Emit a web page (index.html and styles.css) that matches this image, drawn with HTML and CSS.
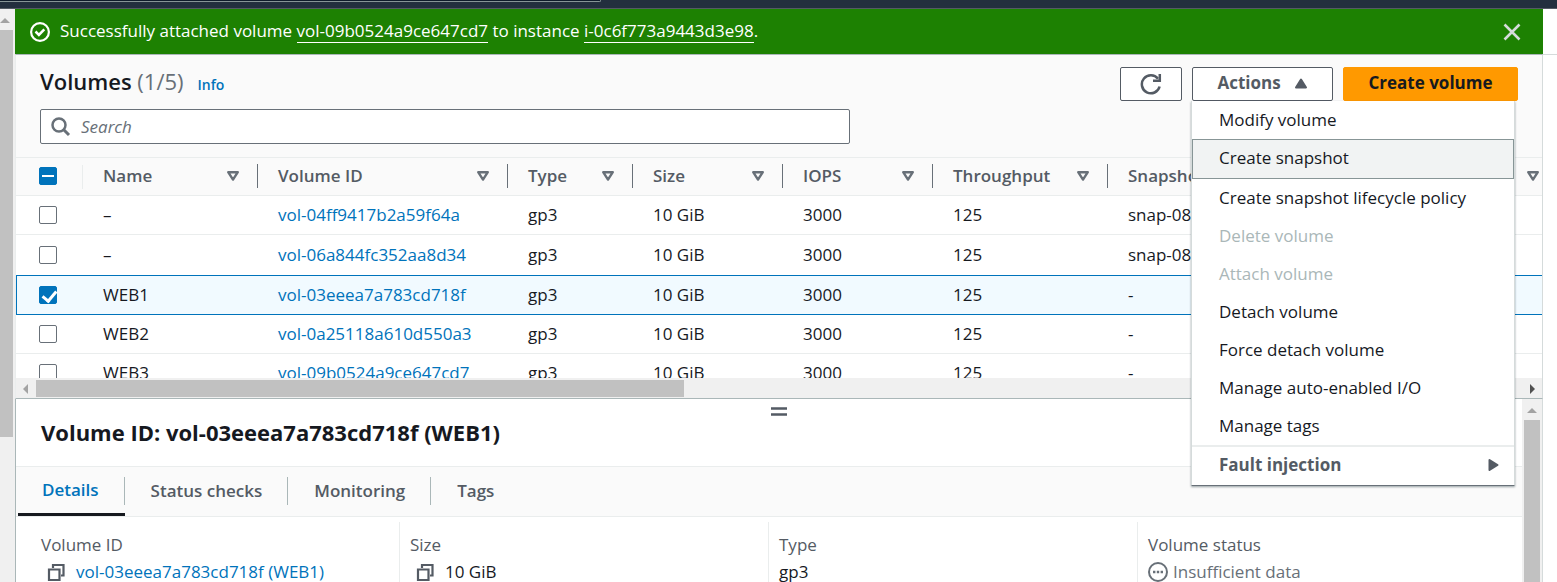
FILE: index.html
```html
<!DOCTYPE html>
<html lang="en">
<head>
<meta charset="utf-8">
<title>Volumes | EC2</title>
<link rel="stylesheet" href="styles.css">
</head>
<body>
<svg class="sprite" aria-hidden="true">
  <symbol id="i-sort" viewBox="0 0 14 12"><path d="M2.200 2.200h9.600L7 9.600z" fill="none" stroke="#687078" stroke-width="2.400" stroke-linejoin="round"/></symbol>
  <symbol id="i-copy" viewBox="0 0 20 18"><path d="M3 6.500h10.500V17H3z" fill="none" stroke="#545b64" stroke-width="2.200"/><path d="M7 5V2h10.500v10.500H15" fill="none" stroke="#545b64" stroke-width="2.200"/></symbol>
</svg>
<header class="topbar"><div class="topbar-search"></div></header>
<div class="shell">
  <div class="vscroll"><span class="arrow-up"></span><div class="vthumb"></div></div>
  <main class="main">
    <div class="flash" role="status">
      <svg class="flash-icon" viewBox="0 0 20 20"><circle cx="10" cy="10" r="8.900" fill="none" stroke="#fff" stroke-width="2.200"/><path d="M5.500 9.500l3.400 3.400 5.400-5.600" fill="none" stroke="#fff" stroke-width="2.500"/></svg>
      <p class="flash-text">Successfully attached volume <a href="#">vol-09b0524a9ce647cd7</a> to instance <a href="#">i-0c6f773a9443d3e98</a>.</p>
      <button class="flash-close" aria-label="Close"><svg viewBox="0 0 18 18"><path d="M1.500 1.500l15 15M16.500 1.500l-15 15" stroke="#d5dbdb" stroke-width="2.600"/></svg></button>
    </div>
    <section class="volumes">
      <div class="toolbar">
        <div class="titles">
          <h1 class="title">Volumes <span class="count">(1/5)</span></h1>
          <a class="info" href="#">Info</a>
        </div>
        <div class="actions">
          <button class="btn btn-refresh" aria-label="Refresh"><svg viewBox="0 0 22 22"><path d="M19.600 13.500A9 9 0 1 1 18 5.800" fill="none" stroke="#545b64" stroke-width="2.500"/><path d="M19.800 1v6.700H13" fill="none" stroke="#545b64" stroke-width="2.500"/></svg></button>
          <div class="dropdown">
            <button class="btn btn-actions" aria-expanded="true">Actions <svg viewBox="0 0 14 11"><path d="M7 1.500L12 9.500H2z" fill="#545b64" stroke="#545b64" stroke-width="2" stroke-linejoin="round"/></svg></button>
            <div class="menu" role="menu">
              <button class="item" role="menuitem">Modify volume</button>
              <button class="item item-active" role="menuitem">Create snapshot</button>
              <button class="item" role="menuitem">Create snapshot lifecycle policy</button>
              <button class="item" role="menuitem" disabled>Delete volume</button>
              <button class="item" role="menuitem" disabled>Attach volume</button>
              <button class="item" role="menuitem">Detach volume</button>
              <button class="item" role="menuitem">Force detach volume</button>
              <button class="item" role="menuitem">Manage auto-enabled I/O</button>
              <button class="item" role="menuitem">Manage tags</button>
              <button class="item item-group" role="menuitem">Fault injection <svg viewBox="0 0 11 14"><path d="M1.500 2L9.500 7l-8 5z" fill="#545b64" stroke="#545b64" stroke-width="2" stroke-linejoin="round"/></svg></button>
            </div>
          </div>
          <button class="btn btn-primary">Create volume</button>
        </div>
      </div>
      <div class="search">
        <svg viewBox="0 0 20 20"><circle cx="8" cy="8" r="6.500" fill="none" stroke="#687078" stroke-width="2.500"/><path d="M12.500 12.500l5.500 5.500" stroke="#687078" stroke-width="3"/></svg>
        <input type="text" placeholder="Search" aria-label="Search volumes">
      </div>
      <div class="table-wrap">
        <table class="table">
          <colgroup><col class="c-check"><col class="c-name"><col class="c-id"><col class="c-type"><col class="c-mid"><col class="c-mid"><col class="c-thr"><col class="c-snap"></colgroup>
          <thead>
            <tr>
              <th class="light"><input type="checkbox" class="check mixed" aria-label="Select all"></th>
              <th><div class="th">Name<svg><use href="#i-sort"/></svg></div></th>
              <th><div class="th">Volume ID<svg><use href="#i-sort"/></svg></div></th>
              <th><div class="th">Type<svg><use href="#i-sort"/></svg></div></th>
              <th><div class="th">Size<svg><use href="#i-sort"/></svg></div></th>
              <th><div class="th">IOPS<svg><use href="#i-sort"/></svg></div></th>
              <th><div class="th">Throughput<svg><use href="#i-sort"/></svg></div></th>
              <th><div class="th">Snapshot<svg><use href="#i-sort"/></svg></div></th>
            </tr>
          </thead>
          <tbody>
            <tr><td><input type="checkbox" class="check" aria-label="Select vol-04ff9417b2a59f64a"></td><td>–</td><td><a href="#">vol-04ff9417b2a59f64a</a></td><td>gp3</td><td>10 GiB</td><td>3000</td><td>125</td><td>snap-08</td></tr>
            <tr class="before-selected"><td><input type="checkbox" class="check" aria-label="Select vol-06a844fc352aa8d34"></td><td>–</td><td><a href="#">vol-06a844fc352aa8d34</a></td><td>gp3</td><td>10 GiB</td><td>3000</td><td>125</td><td>snap-08</td></tr>
            <tr class="selected"><td><input type="checkbox" class="check" checked aria-label="Select WEB1"></td><td>WEB1</td><td><a href="#">vol-03eeea7a783cd718f</a></td><td>gp3</td><td>10 GiB</td><td>3000</td><td>125</td><td>-</td></tr>
            <tr><td><input type="checkbox" class="check" aria-label="Select WEB2"></td><td>WEB2</td><td><a href="#">vol-0a25118a610d550a3</a></td><td>gp3</td><td>10 GiB</td><td>3000</td><td>125</td><td>-</td></tr>
            <tr><td><input type="checkbox" class="check" aria-label="Select WEB3"></td><td>WEB3</td><td><a href="#">vol-09b0524a9ce647cd7</a></td><td>gp3</td><td>10 GiB</td><td>3000</td><td>125</td><td>-</td></tr>
          </tbody>
        </table>
      </div>
      <div class="hscroll"><span class="arrow-left"></span><div class="htrack"><div class="hthumb"></div></div><span class="arrow-right"></span></div>
    </section>
    <section class="split">
      <div class="split-body">
        <div class="grip"><svg viewBox="0 0 16 10"><path d="M0 1.500h16M0 7.500h16" stroke="#545b64" stroke-width="2.400"/></svg></div>
        <h2 class="split-title">Volume ID: vol-03eeea7a783cd718f (WEB1)</h2>
        <div class="tabs" role="tablist">
          <button class="tab tab-active" role="tab" aria-selected="true">Details</button>
          <button class="tab" role="tab">Status checks</button>
          <button class="tab" role="tab">Monitoring</button>
          <button class="tab" role="tab">Tags</button>
        </div>
        <dl class="details">
          <div class="field"><dt>Volume ID</dt><dd><svg class="copy"><use href="#i-copy"/></svg><a href="#">vol-03eeea7a783cd718f (WEB1)</a></dd></div>
          <div class="field"><dt>Size</dt><dd><svg class="copy"><use href="#i-copy"/></svg>10 GiB</dd></div>
          <div class="field"><dt>Type</dt><dd>gp3</dd></div>
          <div class="field"><dt>Volume status</dt><dd class="muted"><svg class="status" viewBox="0 0 20 20"><circle cx="10" cy="10" r="9" fill="none" stroke="#687078" stroke-width="2"/><path d="M5 10h2.400M8.800 10h2.400M12.600 10H15" stroke="#687078" stroke-width="2.400"/></svg>Insufficient data</dd></div>
        </dl>
      </div>
      <div class="vscroll vscroll-inner"><span class="arrow-up"></span><div class="vthumb"></div></div>
    </section>
  </main>
  <aside class="side"></aside>
</div>
</body>
</html>
```
FILE: styles.css
```css
* { box-sizing: border-box; }
body {
  margin: 0;
  height: 100vh;
  overflow: hidden;
  display: flex;
  flex-direction: column;
  background: #fff;
  color: #16191f;
  font: 17px/24px "Open Sans", "Noto Sans", sans-serif;
}
h1, h2, p, dl, dd { margin: 0; }
button, input { font: inherit; color: inherit; }
button { padding: 0; background: none; border: 0; }
a { color: #0073bb; text-decoration: none; }
svg { display: block; flex: none; }
.sprite { position: absolute; width: 0; height: 0; }

.topbar {
  flex: none;
  height: 9px;
  background: #232f3e;
  border-bottom: 1px solid #545b64;
}
.topbar-search {
  width: 601px;
  height: 2px;
  background: #0f1b2a;
  border-bottom: 1px solid #879596;
  border-right: 1px solid #879596;
  border-bottom-right-radius: 2px;
}
.shell { flex: 1; min-height: 0; display: flex; }
.main { flex: 1; min-width: 0; display: flex; flex-direction: column; }
.side {
  width: 14px;
  height: 46px;
  border-bottom: 1px solid #d5dbdb;
}

.vscroll {
  width: 15px;
  padding-right: 2px;
  background: #f0f0f0;
  display: flex;
  flex-direction: column;
}
.vscroll .vthumb { height: 407px; background: #c1c1c1; }
.arrow-up { height: 21px; padding: 9px 0 0; }
.arrow-up::before {
  content: "";
  display: block;
  width: 0;
  border: 5px solid transparent;
  border-top: 0;
  border-bottom-color: #a3a3a3;
}

.flash {
  flex: none;
  height: 45px;
  padding: 0 22px 0 15px;
  display: flex;
  align-items: center;
  background: #1d8102;
  color: #fff;
}
.flash-icon { width: 20px; height: 20px; margin-right: 10px; }
.flash-text { flex: 1; padding-bottom: 2px; }
.flash-text a { color: #fff; border-bottom: 1px solid #fff; }
.flash-close svg { width: 18px; height: 18px; }

.volumes {
  flex: none;
  background: #fafafa;
  border: 1px solid #aab7b8;
  border-left-color: #eaeded;
  border-right-color: #d5dbdb;
}
.toolbar {
  display: flex;
  justify-content: space-between;
  padding: 12px 24px 8px;
}
.titles { display: flex; align-items: baseline; gap: 10px; }
.title { font-size: 22px; line-height: 28px; font-weight: 600; }
.count { font-weight: 400; color: #687078; }
.info { margin-left: 4px; font-size: 14px; font-weight: 600; }
.actions { display: flex; gap: 10px; }
.btn {
  height: 34px;
  padding-bottom: 2px;
  display: flex;
  align-items: center;
  justify-content: center;
  background: #fff;
  border: 1px solid #545b64;
  border-radius: 2px;
  font-weight: 700;
  color: #545b64;
}
.btn-refresh { width: 62px; padding: 0; }
.btn-refresh svg { width: 22px; height: 22px; }
.btn-actions { width: 141px; gap: 13px; }
.btn-actions svg { width: 14px; height: 11px; }
.btn-primary { width: 175px; background: #ff9900; border-color: #ff9900; color: #16191f; }

.dropdown { position: relative; }
.menu {
  position: absolute;
  z-index: 2;
  top: 34px;
  left: -1px;
  width: 324px;
  display: flex;
  flex-direction: column;
  background: #fff;
  border: 1px solid #d5dbdb;
  border-top: 0;
  border-bottom-color: #687078;
  box-shadow: 0 1px 2px rgba(0, 28, 36, 0.4);
}
.item {
  height: 38px;
  padding: 0 27px;
  text-align: left;
  white-space: nowrap;
}
.item:disabled { color: #aab7b8; }
.item-active {
  height: 40px;
  padding: 0 26px 2px;
  background: #f1f3f3;
  border: 1px solid #879596;
}
.item-group {
  height: 40px;
  padding: 0 15px 2px 27px;
  border-top: 2px solid #eaeded;
  display: flex;
  align-items: center;
  justify-content: space-between;
  font-weight: 700;
  color: #545b64;
}
.item-group svg { width: 11px; height: 14px; }

.search {
  max-width: 810px;
  height: 35px;
  margin: 0 24px 13px;
  padding: 0 10px;
  display: flex;
  align-items: center;
  gap: 10px;
  background: #fff;
  border: 1px solid #687078;
  border-radius: 2px;
}
.search svg { width: 20px; height: 20px; }
.search input { flex: 1; min-width: 0; padding: 0; border: 0; outline: 0; background: none; }
.search input::placeholder { color: #687078; font-style: italic; opacity: 1; }

.table-wrap { height: 221px; overflow: hidden; }
.table {
  width: 100%;
  min-width: 1542px;
  table-layout: fixed;
  border-collapse: separate;
  border-spacing: 0;
  text-align: left;
}
.c-check { width: 67px; }
.c-name, .c-thr { width: 175px; }
.c-id { width: 250px; }
.c-type { width: 125px; }
.c-mid { width: 150px; }
.c-snap { width: 450px; }
th {
  height: 39px;
  padding: 0 0 2px;
  border-top: 1px solid #eaeded;
  border-bottom: 1px solid #eaeded;
  font-weight: 600;
  color: #545b64;
}
.th {
  display: flex;
  align-items: center;
  justify-content: space-between;
  padding: 0 17px 0 20px;
  border-right: 1px solid #687078;
}
.th svg { width: 14px; height: 12px; }
.light { background: linear-gradient(#eaeded, #eaeded) right center / 1px 24px no-repeat; }
td {
  height: 39px;
  padding: 0 0 0 20px;
  background: #fff;
  border-bottom: 1px solid #eaeded;
  white-space: nowrap;
}
th:first-child, td:first-child { padding-left: 23px; }
.before-selected td { height: 40px; border-bottom: 0; }
.selected td {
  height: 40px;
  background: #f1faff;
  border-top: 1px solid #0073bb;
  border-bottom-color: #0073bb;
}
.selected td:first-child { box-shadow: inset 1px 0 #0073bb; }
.check {
  appearance: none;
  display: block;
  width: 18px;
  height: 18px;
  margin: 0;
  background: #fff;
  border: 1px solid #687078;
  border-radius: 2px;
}
.check:checked, .mixed { background: #0073bb; border-color: #0073bb; }
.mixed::before {
  content: "";
  display: block;
  width: 12px;
  height: 2px;
  margin: 7px 2px;
  background: #fff;
}
.check:checked::before {
  content: "";
  display: block;
  width: 6px;
  height: 11px;
  margin: 1px 5px;
  border: solid #fff;
  border-width: 0 3px 3px 0;
  transform: rotate(40deg);
}

.hscroll {
  height: 20px;
  padding: 2px 0 1px;
  display: flex;
  align-items: center;
  background: #f0f0f0;
}
.htrack { flex: 1; align-self: stretch; }
.hthumb { width: 43.6%; height: 100%; background: #c1c1c1; }
.arrow-left { width: 20px; padding-left: 7px; }
.arrow-right { width: 20px; padding-left: 8px; }
.arrow-left::before, .arrow-right::before {
  content: "";
  display: block;
  width: 0;
  border: 5px solid transparent;
}
.arrow-left::before { border-left: 0; border-right-color: #a3a3a3; }
.arrow-right::before { border-right: 0; border-left-color: #505050; }

.split {
  flex: 1;
  min-height: 0;
  display: flex;
  border-left: 1px solid #aab7b8;
  border-right: 1px solid #d5dbdb;
}
.split-body { flex: 1; min-width: 0; }
.grip { display: flex; justify-content: center; padding: 8px 0 0 20px; }
.grip svg { width: 16px; height: 10px; }
.split-title {
  height: 50px;
  padding-left: 25px;
  font-size: 22px;
  line-height: 30px;
  font-weight: 700;
  border-bottom: 1px solid #eaeded;
}
.tabs {
  height: 50px;
  padding-left: 2px;
  display: flex;
  background: #fafafa;
  border-bottom: 1px solid #eaeded;
}
.tab {
  padding: 0 26px 2px;
  font-weight: 600;
  color: #545b64;
  background: linear-gradient(#aab7b8, #aab7b8) right 10px / 1px 28px no-repeat;
}
.tab:last-child { background: none; }
.tab-active { padding: 0 26px 0 24px; color: #0073bb; border-bottom: 3px solid #16191f; }
.details {
  display: grid;
  grid-template-columns: repeat(4, 1fr);
  padding: 5px 16px 0 14px;
}
.field { padding: 10px 0 20px 11px; }
.field + .field { border-left: 1px solid #eaeded; padding-left: 10px; }
dt { color: #545b64; line-height: 26px; }
dd { display: flex; align-items: center; line-height: 28px; }
.copy { width: 20px; height: 18px; margin: 0 10px 0 5px; }
.status { width: 20px; height: 20px; margin-right: 5px; }
.muted { color: #687078; }
.vscroll-inner { width: 20px; }
.vscroll-inner .arrow-up { padding-left: 5px; }
.vscroll-inner .vthumb { flex: 1; height: auto; margin-left: 2px; }
```
